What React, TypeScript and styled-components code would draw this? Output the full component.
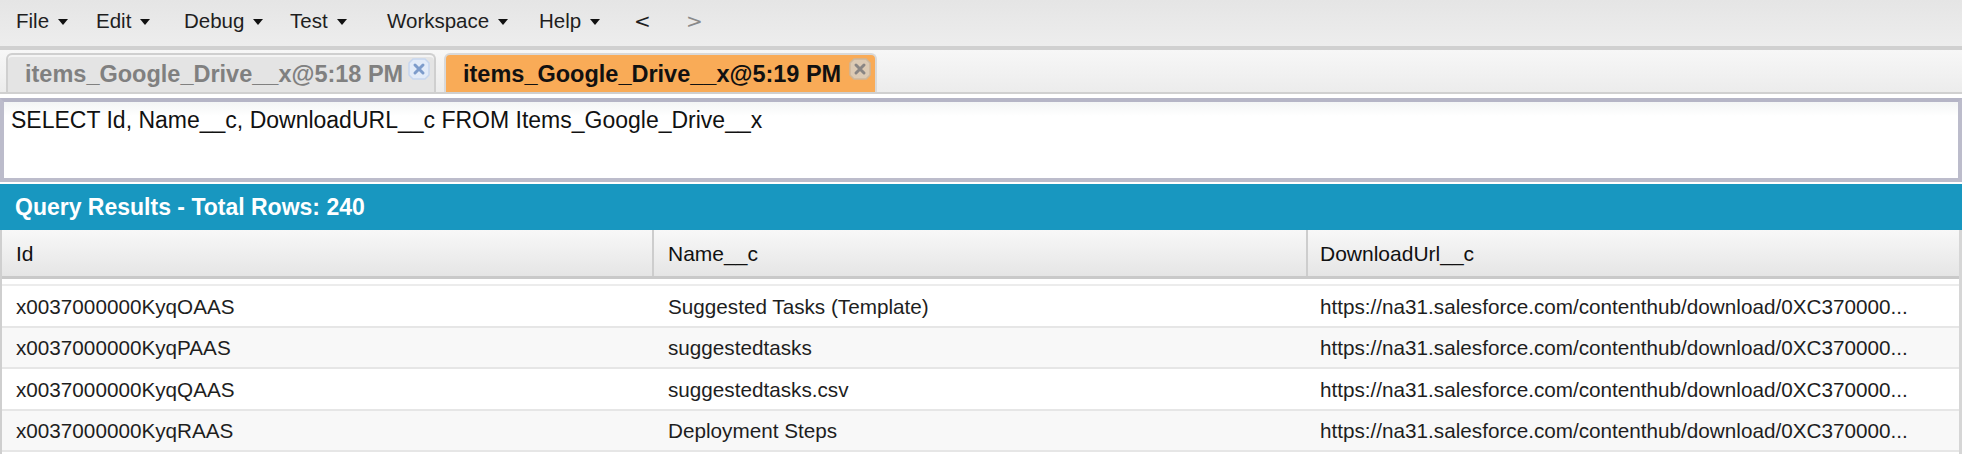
import React from "react";
import styled, { createGlobalStyle } from "styled-components";

const GlobalStyle = createGlobalStyle`
  html, body { margin: 0; padding: 0; background: #ffffff; }
  body { font-family: "Liberation Sans", Arial, sans-serif; color: #1e1e1e; }
  * { box-sizing: border-box; }
`;

const Page = styled.div`
  width: 1962px;
  height: 454px;
  overflow: hidden;
  display: flex;
  flex-direction: column;
`;

const MenuBar = styled.div`
  height: 50px;
  flex: none;
  display: flex;
  align-items: center;
  padding: 0 0 4px 16px;
  background: linear-gradient(#e5e5e5, #ededed);
  border-bottom: 4px solid #d0d0d0;
`;

const MenuItem = styled.div<{ $w: number }>`
  width: ${(p) => p.$w}px;
  flex: none;
  display: flex;
  align-items: center;
  gap: 9px;
  font-size: 20.5px;
  color: #1e1e1e;
`;

const Caret = styled.span`
  width: 0;
  height: 0;
  border-left: 5px solid transparent;
  border-right: 5px solid transparent;
  border-top: 6px solid #111;
  margin-top: 2px;
`;

const NavArrow = styled.div<{ $dim?: boolean; $w: number }>`
  width: ${(p) => p.$w}px;
  flex: none;
  font-family: "DejaVu Sans", sans-serif;
  font-size: 20px;
  color: ${(p) => (p.$dim ? "#8a8a8a" : "#1e1e1e")};
`;

const TabStrip = styled.div`
  height: 44px;
  flex: none;
  display: flex;
  align-items: flex-end;
  gap: 8px;
  padding-left: 6px;
  background: linear-gradient(#f7f7f7, #ececec);
  border-bottom: 2px solid #d0d0d0;
`;

const Tab = styled.div<{ $active?: boolean; $w: number }>`
  width: ${(p) => p.$w}px;
  height: 39px;
  display: flex;
  align-items: center;
  justify-content: space-between;
  padding: 0 4px 0 17px;
  border: 2px solid ${(p) => (p.$active ? "#d9d9d9" : "#cfcfcf")};
  border-bottom: none;
  border-radius: 6px 6px 0 0;
  background: ${(p) => (p.$active ? "#f9ab57" : "#e4e4e4")};
  box-shadow: ${(p) => (p.$active ? "none" : "inset 0 2px 0 #f4f4f4")};
`;

const TabLabel = styled.span<{ $active?: boolean }>`
  font-weight: 700;
  font-size: 23.5px;
  color: ${(p) => (p.$active ? "#111111" : "#808080")};
  margin-top: 2px;
  white-space: nowrap;
`;

const CloseBox = styled.span`
  width: 22px;
  height: 22px;
  flex: none;
  display: flex;
  margin-top: -9px;
  align-self: center;
`;

const CloseIcon = ({ active }: { active?: boolean }) => (
  <CloseBox>
    <svg width="22" height="22" viewBox="0 0 22 22">
      <path
        d="M5 1 H17 L21 5 V17 L17 21 H5 L1 17 V5 Z"
        fill={active ? "#dccab4" : "#e2ebf8"}
        stroke={active ? "#cdb79c" : "#c6d6ee"}
        strokeWidth="1.5"
      />
      <path
        d="M7 7 L15 15 M15 7 L7 15"
        stroke={active ? "#8a8684" : "#7d9ccb"}
        strokeWidth="3"
        strokeLinecap="round"
      />
    </svg>
  </CloseBox>
);

const EditorWrap = styled.div`
  flex: none;
  padding: 4px 0 2px;
  background: #ffffff;
`;

const Editor = styled.div`
  height: 84px;
  padding: 5px 7px;
  border: 4px solid #bcbccb;
  border-top-color: #b5b5c6;
  background: linear-gradient(#f3f5f5, #ffffff 14px);
  font-size: 23px;
  color: #111;
  white-space: nowrap;
`;

const ResultsTitle = styled.div`
  height: 46px;
  flex: none;
  display: flex;
  align-items: center;
  padding-left: 15px;
  background: #1897c0;
  color: #ffffff;
  font-weight: 700;
  font-size: 23px;
`;

const Grid = styled.div`
  flex: 1;
  display: flex;
  flex-direction: column;
  border-left: 2px solid #cfcfcf;
  border-right: 3px solid #d6d6d6;
`;

const HeaderRow = styled.div`
  height: 49px;
  flex: none;
  display: grid;
  grid-template-columns: 652px 654px 1fr;
  background: linear-gradient(#f8f8f8, #e5e5e5);
  border-bottom: 3px solid #c9c9c9;
`;

const HeaderCell = styled.div<{ $last?: boolean }>`
  display: flex;
  align-items: center;
  padding-left: ${(p) => (p.$last ? 12 : 14)}px;
  padding-top: 1px;
  font-size: 21px;
  color: #111;
  border-right: ${(p) => (p.$last ? "none" : "2px solid #cdcdcd")};
`;

const Spacer = styled.div`
  height: 7px;
  flex: none;
  background: #ffffff;
  border-top: 2px solid #ffffff;
  border-bottom: 2px solid #ececec;
`;

const Row = styled.div<{ $alt?: boolean }>`
  height: 41.5px;
  flex: none;
  display: grid;
  grid-template-columns: 652px 654px 1fr;
  background: ${(p) => (p.$alt ? "#f8f8f8" : "#ffffff")};
  border-bottom: 2px solid #e6e6e6;
`;

const Cell = styled.div<{ $last?: boolean }>`
  display: flex;
  align-items: center;
  padding-left: ${(p) => (p.$last ? 12 : 14)}px;
  padding-top: 2px;
  font-size: 20.7px;
  color: #1e1e1e;
  white-space: nowrap;
  overflow: hidden;
`;

const menus = [
  { label: "File", w: 80 },
  { label: "Edit", w: 88 },
  { label: "Debug", w: 106 },
  { label: "Test", w: 97 },
  { label: "Workspace", w: 152 },
  { label: "Help", w: 95 },
];

const url = "https://na31.salesforce.com/contenthub/download/0XC370000...";

const rows = [
  { id: "x0037000000KyqOAAS", name: "Suggested Tasks (Template)" },
  { id: "x0037000000KyqPAAS", name: "suggestedtasks" },
  { id: "x0037000000KyqQAAS", name: "suggestedtasks.csv" },
  { id: "x0037000000KyqRAAS", name: "Deployment Steps" },
];

export default function App() {
  return (
    <>
      <GlobalStyle />
      <Page>
        <MenuBar>
          {menus.map((m) => (
            <MenuItem key={m.label} $w={m.w}>
              {m.label}
              <Caret />
            </MenuItem>
          ))}
          <NavArrow $w={52}>&lt;</NavArrow>
          <NavArrow $w={40} $dim>
            &gt;
          </NavArrow>
        </MenuBar>
        <TabStrip>
          <Tab $w={430}>
            <TabLabel>items_Google_Drive__x@5:18 PM</TabLabel>
            <CloseIcon />
          </Tab>
          <Tab $w={433} $active>
            <TabLabel $active>items_Google_Drive__x@5:19 PM</TabLabel>
            <CloseIcon active />
          </Tab>
        </TabStrip>
        <EditorWrap>
          <Editor>SELECT Id, Name__c, DownloadURL__c FROM Items_Google_Drive__x</Editor>
        </EditorWrap>
        <ResultsTitle>Query Results - Total Rows: 240</ResultsTitle>
        <Grid>
          <HeaderRow>
            <HeaderCell>Id</HeaderCell>
            <HeaderCell>Name__c</HeaderCell>
            <HeaderCell $last>DownloadUrl__c</HeaderCell>
          </HeaderRow>
          <Spacer />
          {rows.map((r, i) => (
            <Row key={r.id} $alt={i % 2 === 1}>
              <Cell>{r.id}</Cell>
              <Cell>{r.name}</Cell>
              <Cell $last>{url}</Cell>
            </Row>
          ))}
        </Grid>
      </Page>
    </>
  );
}
